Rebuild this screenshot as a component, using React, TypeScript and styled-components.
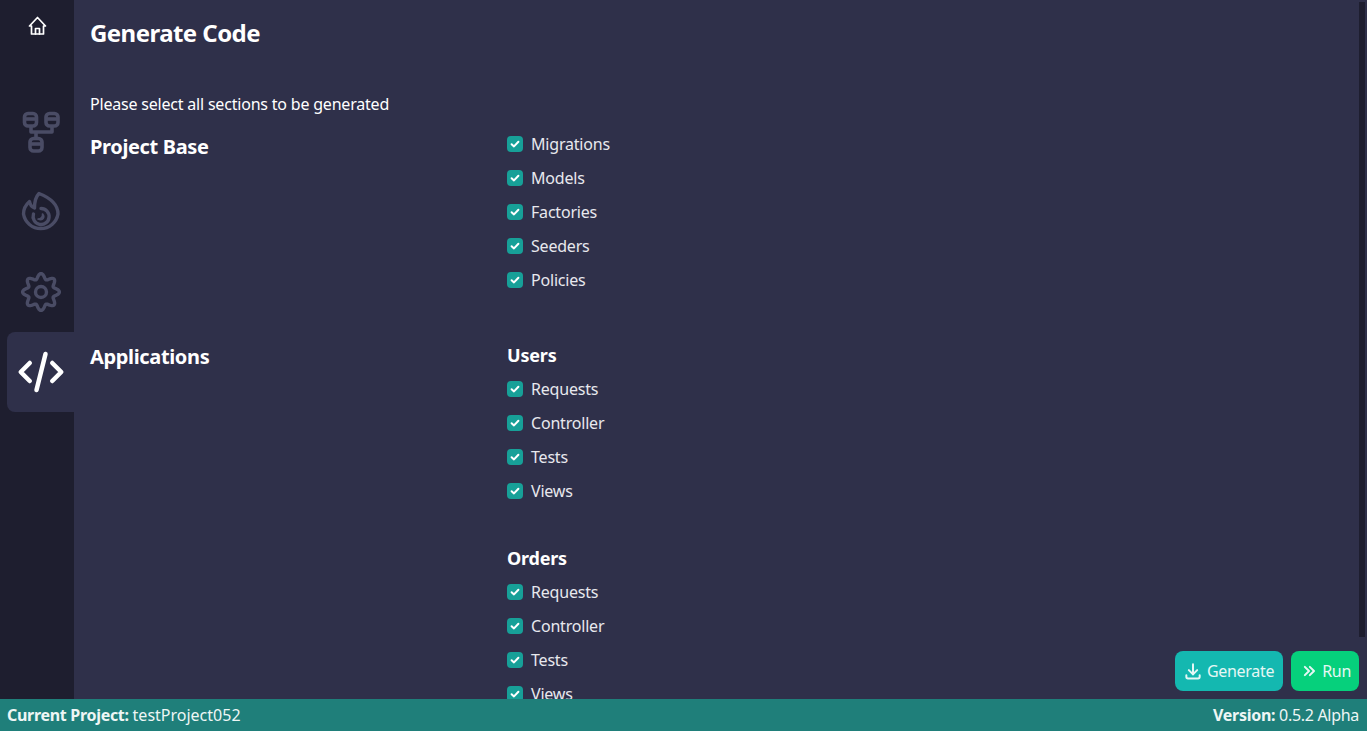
import styled, { createGlobalStyle } from "styled-components";
import { TbCode, TbDownload, TbChevronsRight } from "react-icons/tb";

const GlobalStyle = createGlobalStyle`
  html, body, #root {
    margin: 0;
    height: 100%;
  }
  body {
    overflow: hidden;
    font-family: "Noto Sans", "Open Sans", sans-serif;
    color: #fff;
    letter-spacing: -0.2px;
  }
`;

const Page = styled.div`
  display: flex;
  flex-direction: column;
  height: 731px;
`;

const Body = styled.div`
  position: relative;
  display: flex;
  flex: 1;
  min-height: 0;
`;

const Sidebar = styled.nav`
  display: flex;
  flex-direction: column;
  align-items: flex-end;
  width: 74px;
  flex: none;
  background: #1e1e2f;
`;

const HomeLink = styled.div`
  display: flex;
  justify-content: center;
  align-items: center;
  width: 74px;
  height: 52px;
  margin-bottom: 40px;
`;

const NavTab = styled.div<{ $active?: boolean }>`
  display: flex;
  justify-content: center;
  align-items: center;
  width: 67px;
  height: 80px;
  border-radius: 8px 0 0 8px;
  background: ${(p) => (p.$active ? "#2f304a" : "transparent")};
  color: ${(p) => (p.$active ? "#fff" : "#4a4c65")};
  font-size: 54px;
`;

const Main = styled.main`
  flex: 1;
  min-width: 0;
  overflow: hidden;
  background: #2f304a;
  padding: 0 16px;
`;

const Title = styled.h1`
  margin: 0;
  padding-top: 16px;
  height: 52px;
  font-size: 24px;
  line-height: 34px;
  font-weight: 700;
  letter-spacing: -0.55px;
`;

const Intro = styled.p`
  margin: 0 0 16px;
  padding-top: 24px;
  font-size: 16px;
  line-height: 24px;
`;

const Section = styled.section`
  display: grid;
  grid-template-columns: 417px 1fr;
  margin-bottom: 45px;
`;

const SectionName = styled.h2`
  margin: 0;
  font-size: 20px;
  line-height: 30px;
  font-weight: 700;
  letter-spacing: -0.35px;
`;

const BaseList = styled.div`
  margin-top: -5px;
`;

const Groups = styled.div`
  display: flex;
  flex-direction: column;
  gap: 37px;
`;

const GroupName = styled.h3`
  margin: 0;
  height: 30px;
  font-size: 18px;
  line-height: 26px;
  font-weight: 700;
`;

const CheckRow = styled.label`
  display: flex;
  align-items: center;
  gap: 8px;
  height: 34px;
  font-size: 16px;
  color: #e8e8ee;
`;

const CheckBox = styled.span`
  display: flex;
  justify-content: center;
  align-items: center;
  width: 16px;
  height: 16px;
  border-radius: 4px;
  background: #17a098;
`;

const Actions = styled.div`
  position: absolute;
  right: 8px;
  bottom: 8px;
  display: flex;
  gap: 8px;
`;

const ActionButton = styled.button<{ $tone: string; $wide?: boolean }>`
  display: flex;
  align-items: center;
  gap: ${(p) => (p.$wide ? "4px" : "3px")};
  height: 40px;
  padding: 0 ${(p) => (p.$wide ? "9px" : "8px")} 0 8px;
  border: none;
  border-radius: 8px;
  background: ${(p) => p.$tone};
  color: #e6f7f5;
  font-family: inherit;
  font-size: 16px;
  letter-spacing: -0.3px;
  svg {
    font-size: 20px;
    stroke-width: 2.4;
  }
`;

const Scrollbar = styled.div`
  position: absolute;
  top: 2px;
  right: 2px;
  width: 6px;
  height: 635px;
  background: #1e1e2f;
`;

const StatusBar = styled.footer`
  display: flex;
  justify-content: space-between;
  align-items: center;
  height: 32px;
  padding: 0 8px 0 7px;
  background: #1f7f7a;
  font-size: 16px;
  color: #eef6f5;
  letter-spacing: -0.3px;
  b {
    font-weight: 700;
  }
`;

const ProjectName = styled.span`
  letter-spacing: 0;
`;

const CheckMark = () => (
  <svg width="10" height="10" viewBox="0 0 10 10" fill="none">
    <path d="M1.6 5.2 L4 7.4 L8.4 2.8" stroke="#fff" strokeWidth="2" strokeLinecap="round" strokeLinejoin="round" />
  </svg>
);

const HomeIcon = () => (
  <svg width="30" height="30" viewBox="0 0 30 30" fill="none" stroke="#fff" strokeWidth="1.7" strokeLinecap="round" strokeLinejoin="round">
    <path d="M7.5 15 L15.5 6.5 L23.5 15 H21.5 V23 H9.5 V15 Z" />
    <path d="M13.5 23 V17.5 H17.5 V23" />
  </svg>
);

const SchemaIcon = () => (
  <svg width="40" height="44" viewBox="0 0 40 44" fill="none" stroke="currentColor" strokeWidth="3.6" strokeLinejoin="round">
    <rect x="3.5" y="3.5" width="12" height="12.5" rx="3.5" />
    <path d="M3.5 9 H15.5" />
    <rect x="25" y="3.5" width="12" height="12.5" rx="3.5" />
    <path d="M25 9 H37" />
    <rect x="9" y="28.5" width="12" height="12.5" rx="3.5" />
    <path d="M9 34 H21" />
    <path d="M10 16 V22 H31 V16 M15 22 V28.5" />
  </svg>
);

const FlameIcon = () => (
  <svg width="46" height="48" viewBox="0 0 46 48" fill="none" stroke="currentColor" strokeWidth="3.4" strokeLinecap="round" strokeLinejoin="round">
    <path d="M21 5.5 C 30 9 40 15 40 26 A 17.5 17.5 0 0 1 5.5 26 C 5.5 21.5 7.5 17 11.5 13.5 C 12 16.5 14 19 16.5 20 C 16.5 14 17.5 9 21 5.5 Z" />
    <path d="M15.5 26 A 8 8 0 1 0 23 20.5" />
    <path d="M20 31 C 23 31 25 28.5 24.5 26 C 27 28.5 25.5 33.5 20 31 Z" strokeWidth="1.6" fill="currentColor" />
  </svg>
);

const gearPoints = Array.from({ length: 160 }, (_, i) => {
  const angle = (i / 160) * Math.PI * 2;
  const r = 15.8 + 2.6 * Math.cos(8 * angle);
  return `${(23 + r * Math.sin(angle)).toFixed(2)},${(24 - r * Math.cos(angle)).toFixed(2)}`;
}).join(" ");

const GearIcon = () => (
  <svg width="46" height="48" viewBox="0 0 46 48" fill="none" stroke="currentColor" strokeWidth="3.4" strokeLinejoin="round">
    <polygon points={gearPoints} />
    <circle cx="23" cy="24" r="5.5" />
  </svg>
);

const Option = ({ label }: { label: string }) => (
  <CheckRow>
    <CheckBox>
      <CheckMark />
    </CheckBox>
    {label}
  </CheckRow>
);

const baseOptions = ["Migrations", "Models", "Factories", "Seeders", "Policies"];
const appOptions = ["Requests", "Controller", "Tests", "Views"];
const apps = ["Users", "Orders"];

const App = () => {
  return (
    <>
      <GlobalStyle />
      <Page>
        <Body>
          <Sidebar>
            <HomeLink>
              <HomeIcon />
            </HomeLink>
            <NavTab>
              <SchemaIcon />
            </NavTab>
            <NavTab>
              <FlameIcon />
            </NavTab>
            <NavTab>
              <GearIcon />
            </NavTab>
            <NavTab $active>
              <TbCode />
            </NavTab>
          </Sidebar>
          <Main>
            <Title>Generate Code</Title>
            <Intro>Please select all sections to be generated</Intro>
            <Section>
              <SectionName>Project Base</SectionName>
              <BaseList>
                {baseOptions.map((o) => (
                  <Option key={o} label={o} />
                ))}
              </BaseList>
            </Section>
            <Section>
              <SectionName>Applications</SectionName>
              <Groups>
                {apps.map((a) => (
                  <div key={a}>
                    <GroupName>{a}</GroupName>
                    {appOptions.map((o) => (
                      <Option key={o} label={o} />
                    ))}
                  </div>
                ))}
              </Groups>
            </Section>
          </Main>
          <Scrollbar />
          <Actions>
            <ActionButton $tone="#14b8b0" $wide>
              <TbDownload />
              Generate
            </ActionButton>
            <ActionButton $tone="#06d07c">
              <TbChevronsRight />
              Run
            </ActionButton>
          </Actions>
        </Body>
        <StatusBar>
          <span>
            <b>Current Project:</b> <ProjectName>testProject052</ProjectName>
          </span>
          <span>
            <b>Version:</b> 0.5.2 Alpha
          </span>
        </StatusBar>
      </Page>
    </>
  );
};

export default App;
